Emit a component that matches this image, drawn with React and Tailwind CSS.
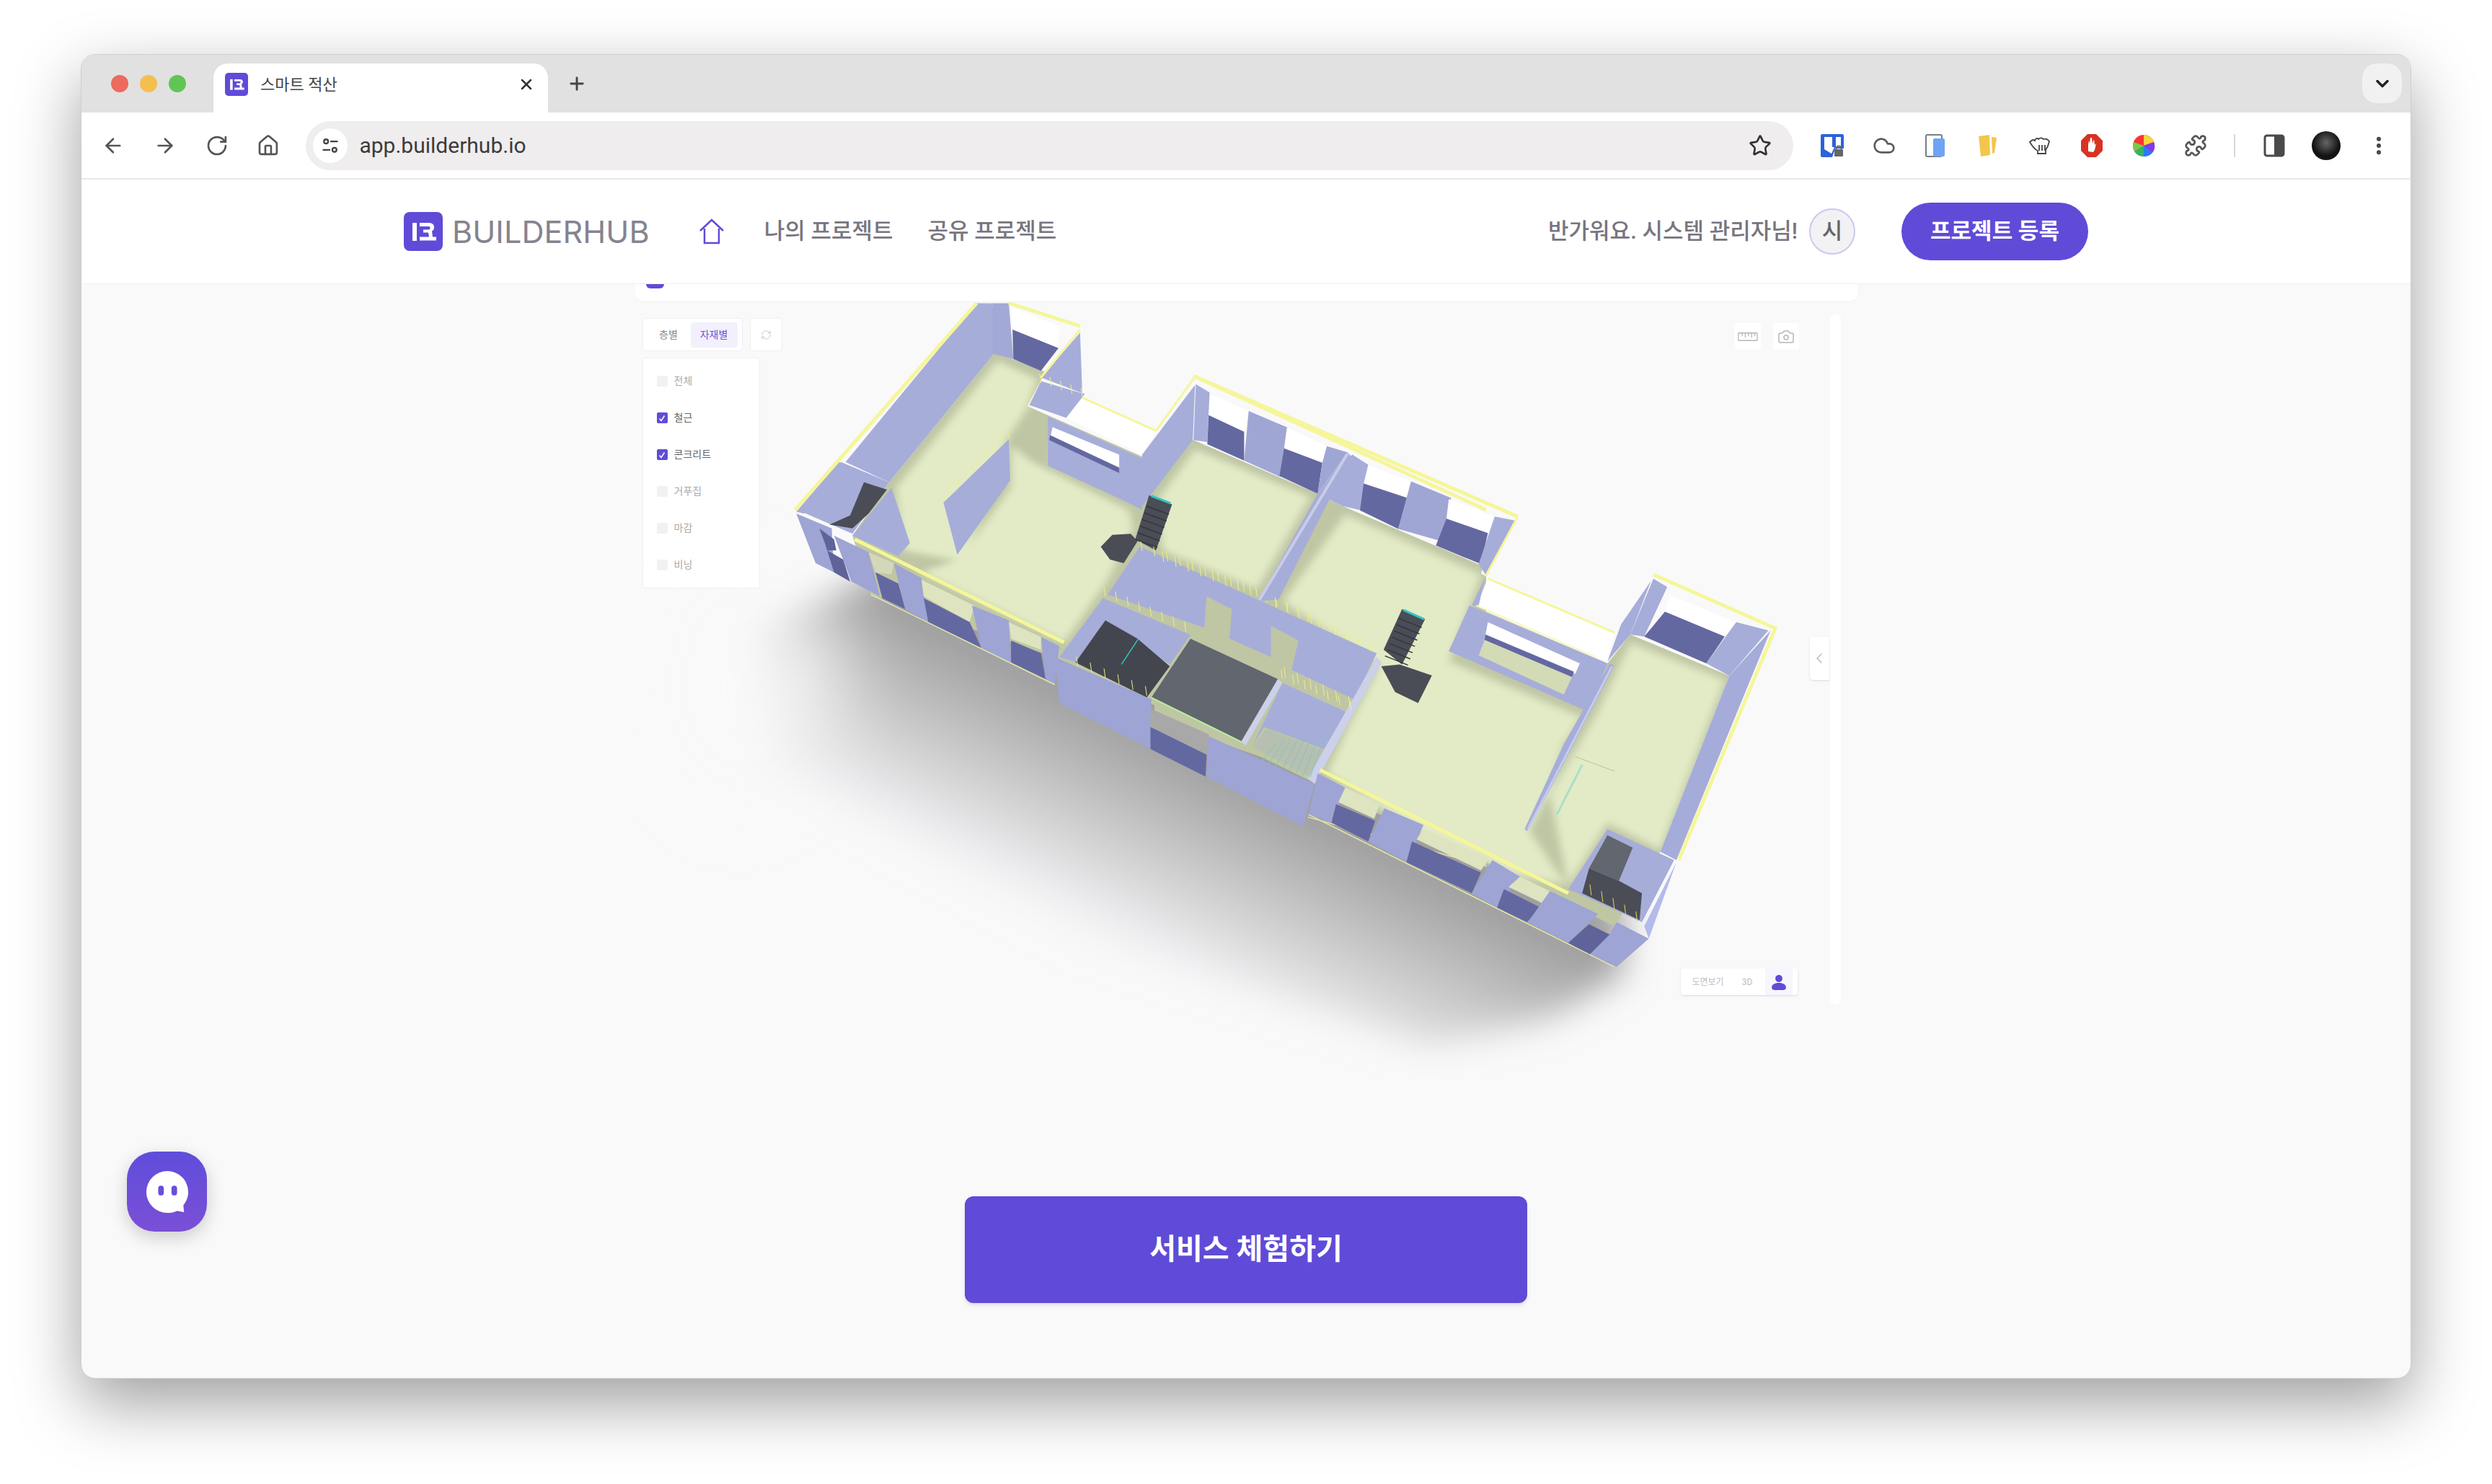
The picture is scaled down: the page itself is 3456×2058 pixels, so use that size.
import React from 'react';
import { ArrowLeft, ArrowRight, RotateCw, House, Star, EllipsisVertical, Puzzle, Cloud, ChevronDown, ChevronLeft, X, Plus, RefreshCw, Camera } from 'lucide-react';

const WALL = '#a7add9';
const FRONT = '#9ea4d4';
const DARK = '#6468a0';
const WHITE = '#ffffff';
const STAIR = '#4a4d56';
const STRIP = '#d4d8b8';

// left half of the model, zoom coordinates of the first crop
const leftFloors = [
  '505,195 592,245 572,320 530,400 430,740 300,710 285,540',
  '535,425 580,470 790,600 800,650 745,790 650,960 340,770 420,735 535,540',
  '625,470 770,550 770,510 625,425',
  '935,435 1185,565 1070,815 865,710 850,580',
];

const leftWalls = [
  [WALL, '460,38 175,470 270,525 500,172 495,40'],
  ['#a3a9d5', '460,38 530,38 540,190 495,175 495,40'],
  [WHITE, '535,50 640,100 638,160 538,110'],
  [DARK, '538,110 638,160 600,222 540,190'],
  [WALL, '685,118 600,240 695,285 690,290'],
  [WALL, '600,250 695,285 655,350 575,315'],
  [WHITE, '690,295 850,385 820,450 655,350'],
  [WALL, '566,318 820,460 820,600 772,570 615,480 615,345'],
  [WHITE, '625,375 770,450 770,490 620,405'],
  [DARK, '620,397 770,485 770,500 618,410'],
  [WALL, '935,260 930,410 820,590 820,450'],
  [WALL, '388,580 530,408 533,520 418,722'],
  [WALL, '165,470 270,525 190,665 80,605'],
  [STAIR, '215,525 265,545 225,610 190,650 140,640 185,615'],
  [WALL, '275,540 315,690 290,725 190,670'],
  [WALL, '160,470 175,476 85,610 68,605'],
  [FRONT, '68,610 145,650 150,770 110,745'],
  ['#5f6399', '118,650 150,680 155,710 135,710 170,735 185,795 150,770 130,690'],
  [FRONT, '150,670 225,715 250,835 188,795'],
  [STRIP, '225,715 280,745 275,775 240,770'],
  [DARK, '240,770 290,800 305,870 255,840'],
  [FRONT, '280,745 340,785 355,905 305,870'],
  ['#dde4bf', '340,790 455,860 445,905 345,835'],
  [DARK, '345,840 445,905 470,975 355,905'],
  [FRONT, '450,860 530,900 535,1020 470,975'],
  ['#dde4bf', '530,905 600,945 600,980 535,950'],
  [DARK, '535,955 600,990 610,1060 535,1015'],
  [FRONT, '600,945 640,970 630,1075 610,1060'],
  // long corridor wall, door openings cut out of its lower edge
  [WALL, '815,700 1330,990 1280,1115 1145,1035 1160,955 1100,915 1100,1000 1010,950 1015,870 960,835 955,920 745,830'],
  [WALL, '735,840 925,940 880,1020 740,900 680,1015 640,1000'],
  ['#62666f', '925,950 1115,1060 1035,1230 840,1110'],
  ['#43464e', '740,900 810,950 880,1025 830,1110 675,1015'],
  [FRONT, '630,1000 840,1115 838,1250 640,1125'],
  ['#a8a8a8', '838,1140 965,1210 965,1270 838,1190'],
  [DARK, '838,1190 960,1265 958,1325 838,1250'],
  [FRONT, '965,1215 1195,1345 1170,1460 960,1325'],
  [WALL, '1125,1070 1265,1150 1215,1250 1085,1190 1060,1240'],
  ['#b7bfb0', '1090,1195 1215,1255 1185,1325 1060,1245'],
  ['#ccd0ea', '1330,1000 1340,1015 1195,1345 1180,1330'],
  ['#ccd0ea', '1115,1060 1125,1070 1045,1240 1035,1232'],
  [STAIR, '835,560 885,585 850,710 805,680'],
  [STAIR, '730,700 755,668 795,665 810,685 780,745 750,735'],
  [STAIR, '1385,870 1435,897 1385,1020 1345,980'],
  [STAIR, '1340,1025 1380,1020 1450,1050 1420,1125 1370,1095'],
];

// right half, zoom coordinates of the second crop
const rightFloors = [
  '415,405 710,550 680,640 640,760 930,895 890,960 860,1070 815,1170 895,1300 780,1275 580,1175 375,1030 430,900 490,770 280,615',
  '1035,715 1240,805 1100,1215 985,1150 900,1300 860,1080 965,880',
];

const rightWalls = [
  [WALL, '90,90 120,110 115,230 85,225'],
  [WHITE, '122,115 205,155 195,205 118,165'],
  [DARK, '118,165 195,205 195,275 115,235'],
  ['#a0a6d4', '205,155 290,195 275,315 195,275'],
  [WHITE, '288,195 375,240 365,280 282,245'],
  [DARK, '282,245 365,280 355,355 272,312'],
  ['#a0a6d4', '375,240 420,255 355,355 365,280'],
  [WALL, '420,255 428,265 270,610 225,615 355,355'],
  ['#a7add9', '430,260 465,285 450,395 410,385 355,355'],
  [WHITE, '465,285 558,325 550,365 455,330'],
  [DARK, '455,330 550,365 530,440 447,395'],
  ['#a0a6d4', '558,325 645,365 625,470 530,440'],
  [WHITE, '640,368 740,410 725,450 635,415'],
  [DARK, '635,415 725,450 710,525 612,480'],
  [WALL, '740,410 785,420 720,550 705,525'],
  [WHITE, '725,560 1000,690 985,760 700,625'],
  [WALL, '720,555 705,625 690,625'],
  // wall with the wide window, frame then opening
  [WALL, '685,625 985,765 940,880 640,735'],
  [WHITE, '725,665 925,765 915,790 720,695'],
  [DARK, '720,695 912,785 908,798 718,708'],
  ['#d3dab6', '718,708 908,798 890,840 705,745'],
  [WALL, '1080,565 1035,695 985,760 1015,670'],
  [WALL, '1085,560 1115,580 1065,700 1035,695'],
  [WHITE, '1120,600 1265,665 1240,700 1110,640'],
  [DARK, '1110,640 1240,700 1200,765 1065,700'],
  [WALL, '1265,665 1335,685 1250,795 1200,765'],
  ['#a6acd9', '1340,685 1250,795 1100,1220 1135,1240'],
  [WALL, '990,765 1000,770 860,1070 810,1170 805,1165 890,960'],
  ['#a7add9', '985,1165 1130,1240 1060,1390 900,1310'],
  ['#62666f', '985,1180 1040,1210 1010,1290 945,1260'],
  [STAIR, '945,1260 1010,1290 1060,1320 1055,1385 930,1320'],
  [FRONT, '355,1030 415,1065 385,1150 335,1130'],
  ['#dde4bf', '415,1065 490,1105 478,1140 400,1100'],
  [DARK, '395,1105 480,1145 465,1195 385,1150'],
  [FRONT, '500,1115 585,1155 550,1245 465,1195'],
  ['#dde4bf', '585,1165 725,1240 710,1265 570,1190'],
  [DARK, '560,1195 710,1270 690,1320 548,1245'],
  [FRONT, '735,1240 795,1280 745,1355 690,1320'],
  ['#dde4bf', '795,1280 860,1315 845,1345 770,1305'],
  [DARK, '760,1310 840,1355 810,1390 745,1355'],
  [FRONT, '860,1315 965,1370 900,1440 812,1390'],
  ['#5f6399', '945,1395 990,1420 945,1470 900,1440'],
  [FRONT, '1005,1390 1075,1430 1005,1498 945,1470 990,1420'],
  ['#b4baea', '1135,1245 1075,1430 1065,1400'],
];

// short rebar ticks along a wall top
const Ticks = ({ x1, y1, x2, y2, n, h = 26, color = '#eef08a' }) => (
  <>
    {Array.from({ length: n }, (_, i) => {
      const x = x1 + ((x2 - x1) * i) / (n - 1);
      const y = y1 + ((y2 - y1) * i) / (n - 1);
      return <line key={i} x1={x} y1={y} x2={x - 3} y2={y - h} stroke={color} strokeWidth="1" vectorEffect="non-scaling-stroke" />;
    })}
  </>
);

const Edge = ({ d, color = '#f5f69a', w = 3 }) => (
  <polyline points={d} fill="none" stroke={color} strokeWidth={w} vectorEffect="non-scaling-stroke" />
);

const Polys = ({ items }) => items.map(([fill, points], i) => <polygon key={i} fill={fill} points={points} />);

const A = 'translate(1060 400) scale(0.6378 0.5102)';
const B = 'translate(1600 480) scale(0.6378 0.574)';

const BuildingModel = () => (
  <svg viewBox="880 393 1700 1100" className="absolute left-0 top-0 h-[1100px] w-[1700px]">
    <defs>
      <filter id="soft" x="-20%" y="-20%" width="140%" height="140%"><feGaussianBlur stdDeviation="9" /></filter>
      <filter id="castBlur" x="-20%" y="-30%" width="140%" height="160%"><feGaussianBlur stdDeviation="24" /></filter>
      <filter id="washBlur" x="-50%" y="-50%" width="200%" height="200%"><feGaussianBlur stdDeviation="50" /></filter>
      <linearGradient id="cast" gradientUnits="userSpaceOnUse" x1="1722" y1="1081" x2="1574" y2="1377">
        <stop offset="0" stopColor="#9f9f9f" />
        <stop offset="0.35" stopColor="#c2c2c2" />
        <stop offset="0.75" stopColor="#ececee" />
        <stop offset="1" stopColor="#f9f9fa" stopOpacity="0" />
      </linearGradient>
    </defs>

    <polygon fill="url(#cast)" filter="url(#castBlur)" points="1300,750 2250,1250 2250,1350 2150,1410 1980,1450 1500,1300 1060,1060 1050,880" />
    {/* the cast shadow thins out towards the far end */}
    <polygon fill="#f9f9fa" opacity="0.8" filter="url(#washBlur)" points="960,780 1160,860 1160,1000 1020,1120 920,1000" />

    {/* floors: dark base first, then the lit middle of each room */}
    <polygon transform={A} fill="#bfc6a4" points="500,172 610,225 570,318 820,455 930,410 1270,600 1568,780 1568,1568 1200,1345 630,1000 230,830 190,670 270,525" />
    <polygon transform={B} fill="#bfc6a4" points="85,225 355,355 410,385 715,530 690,625 985,765 1035,695 1250,795 1100,1220 1000,1400 345,1035 0,900 0,300" />
    <g transform={A} filter="url(#soft)" fill="#e2ebc6">{leftFloors.map((p, i) => <polygon key={i} points={p} />)}</g>
    <g transform={B} filter="url(#soft)" fill="#e2ebc6">{rightFloors.map((p, i) => <polygon key={i} points={p} />)}</g>

    <g transform={A}>
      <Polys items={leftWalls} />
      <Edge d="460,38 160,465 65,600" w={5} />
      <Edge d="530,38 685,100" w={5} />
      <Edge d="600,240 685,110" w={3} />
      <Edge d="690,295 850,385" />
      <Edge d="935,238 1568,600" w={5} />
      <Edge d="935,238 850,385" w={3} />
      <Edge d="195,680 650,960" w={5} />
      <Edge d="230,830 630,1075" color="#e3e8a8" w={1.5} />
      <Edge d="840,1110 1035,1230" color="#b8f0a0" w={2} />
      <Edge d="1180,1435 1568,1568" color="#e3e8a8" w={1.5} />
      <Edge d="840,562 882,582" color="#35c4c4" w={3} />
      <Edge d="1388,872 1433,897" color="#35c4c4" w={3} />
      <Edge d="775,1020 812,950" color="#35c4c4" w={1.5} />
      {[0, 1, 2, 3, 4, 5].map(i => (
        <Edge key={i} d={`${830 - i * 5},${590 + i * 18} ${878 - i * 5},${612 + i * 18}`} color="#33363c" w={1.5} />
      ))}
      {[0, 1, 2, 3, 4, 5, 6].map(i => (
        <Edge key={i} d={`${1378 - i * 5},${895 + i * 17} ${1428 - i * 5},${920 + i * 17}`} color="#33363c" w={1.5} />
      ))}
      {[0, 1, 2, 3, 4, 5, 6, 7].map(i => (
        <Edge key={i} d={`${1112 + i * 15},${1232 - i * 2} ${1080 + i * 15},${1285 + i * 6}`} color="#7cc8c4" w={1} />
      ))}
      <Ticks x1={390} y1={575} x2={530} y2={405} n={10} />
      <Ticks x1={820} y1={712} x2={1070} y2={835} n={10} />
      <Ticks x1={1090} y1={850} x2={1320} y2={985} n={11} />
      <Ticks x1={740} y1={835} x2={915} y2={930} n={8} />
      <Ticks x1={1125} y1={1060} x2={1275} y2={1145} n={7} />
      <Ticks x1={680} y1={1025} x2={830} y2={1105} n={6} />
      <Ticks x1={600} y1={255} x2={690} y2={295} n={5} />
    </g>

    <g transform={B}>
      <Polys items={rightWalls} />
      <Edge d="85,70 790,410" w={5} />
      <Edge d="790,410 720,555" w={3} />
      <Edge d="725,560 1000,690" w={3} />
      <Edge d="700,625 960,750" color="#f7f8c0" w={2} />
      <Edge d="1085,550 1350,680 1140,1240" w={5} />
      <Edge d="360,1022 900,1320" w={5} />
      <Edge d="335,1130 1000,1498" color="#e3e8a8" w={1.5} />
      <Edge d="420,258 228,612" color="#c8cce8" w={4} />
      <Edge d="995,772 812,1165" color="#c6cbee" w={3} />
      <Edge d="915,990 1000,1025" color="#b8c0a0" w={1} />
      <Edge d="875,1130 930,1010" color="#a8e0c8" w={3} />
      <Ticks x1={265} y1={630} x2={470} y2={735} n={9} />
      <Ticks x1={20} y1={520} x2={210} y2={600} n={8} />
      <Ticks x1={285} y1={800} x2={425} y2={870} n={6} />
      <Ticks x1={950} y1={1325} x2={1050} y2={1390} n={5} color="#e5d84a" />
    </g>
  </svg>
);

const LogoMark = ({ className }) => (
  <svg viewBox="0 0 54 54" className={className}>
    <rect width="54" height="54" rx="8" fill="#5f4bd8" />
    <rect x="12" y="15" width="6" height="25" fill="#fff" />
    <path d="M22 15h13q7 0 7 6.500 0 3.500-3 5l1 8h5v5H22v-5h13l-1-6h-7v-4h7q2.500 0 2.500-2.500T34 20H22z" fill="#fff" />
  </svg>
);

const ExtensionIcons = () => (
  <div className="flex items-center">
    {/* password manager */}
    <svg viewBox="0 0 32 32" className="h-8 w-8">
      <path d="M0 2a2 2 0 0 1 2-2h28a2 2 0 0 1 2 2v18H20l-4 12H2a2 2 0 0 1-2-2z" fill="#2b63d9" />
      <path d="M5 4h23v14h-9l-4 9-10-6z" fill="#fff" />
      <rect x="16" y="4" width="5" height="14" fill="#2b63d9" />
      <rect x="19" y="21" width="12" height="10" rx="1" fill="#666" />
      <circle cx="25" cy="20" r="3.500" fill="none" stroke="#666" strokeWidth="2" />
    </svg>
    <Cloud className="ml-10 h-8 w-8 text-[#5a5a5a]" strokeWidth={2} />
    <svg viewBox="0 0 32 32" className="ml-10 h-8 w-8">
      <rect x="2" y="1" width="22" height="30" rx="2" fill="#fff" stroke="#777e88" strokeWidth="2" />
      <rect x="12" y="6" width="16" height="25" rx="2" fill="#6ea4f4" />
    </svg>
    <svg viewBox="0 0 32 32" className="ml-10 h-8 w-8">
      <path d="M3 3l15-2 1 28-13 2z" fill="#f2c64d" />
      <path d="M21 4l7 1-3 21-3 1z" fill="#f2c64d" />
    </svg>
    <svg viewBox="0 0 32 32" className="ml-10 h-8 w-8" fill="none" stroke="#444" strokeWidth="1.800">
      <path d="M2 11c3-3 5-4 7-2 1-3 3-4 5-2 2-2 5-2 7 0 3-1 6 0 8 3-1 5-3 9-5 12v5H13v-4C8 21 5 16 2 11z" />
      <path d="M15 15v8M19 15v8M23 15v8" />
    </svg>
    <svg viewBox="0 0 32 32" className="ml-10 h-8 w-8">
      <path d="M10 0h12l9 9v14l-9 9H10l-9-9V9z" fill="#d83224" />
      <path d="M11 24v-10l1-5 1 4 1-8 2 0 1 8 2-6 1 8 2-2-2 9-2 3z" fill="#fff" />
    </svg>
    <svg viewBox="0 0 32 32" className="ml-10 h-8 w-8">
      <circle cx="16" cy="16" r="15" fill="#f33" />
      <path d="M16 16L16 1A15 15 0 0 1 30 11z" fill="#f7d43a" />
      <path d="M16 16L30 11A15 15 0 0 1 28 26z" fill="#7b3cf0" />
      <path d="M16 16L28 26A15 15 0 0 1 16 31z" fill="#2a7bf4" />
      <path d="M16 16L16 31A15 15 0 0 1 3 24z" fill="#35b36b" />
      <path d="M16 16L3 24A15 15 0 0 1 2 11z" fill="#7ac943" />
    </svg>
    <Puzzle className="ml-10 h-8 w-8 text-[#555]" strokeWidth={2} />
    <div className="ml-[37px] h-8 w-[2px] bg-[#d9d9d9]" />
    <svg viewBox="0 0 32 32" className="ml-[38px] h-8 w-8">
      <rect x="3" y="2" width="26" height="28" rx="3" fill="none" stroke="#4a4a4a" strokeWidth="3" />
      <rect x="16" y="2" width="13" height="28" fill="#4a4a4a" />
    </svg>
    <div className="ml-[36px] h-10 w-10 rounded-full bg-[radial-gradient(circle_at_50%_40%,#666,#111_60%,#222)]" />
    <EllipsisVertical className="ml-[37px] h-8 w-8 text-[#444]" strokeWidth={2.500} />
  </div>
);

const materials = [
  { name: '전체', on: false },
  { name: '철근', on: true },
  { name: '콘크리트', on: true },
  { name: '거푸집', on: false },
  { name: '마감', on: false },
  { name: '비닝', on: false },
];

const DemoOverlay = () => (
  <>
    {/* top bar of the embedded viewer */}
    <div className="absolute left-0 top-0 h-[25px] w-[1695px] rounded-b-xl border-b border-[#f0f0f2] bg-white">
      <div className="ml-[15px] h-[6px] w-[25px] rounded-b-md bg-[#5f4bd8]" />
    </div>

    <div className="absolute left-[10px] top-[47px] flex gap-[10px]">
      <div className="flex h-[46px] w-[139px] items-center rounded border border-[#f0f0f2] bg-white px-[5px] text-[14px]">
        <span className="w-[61px] text-center text-[#888]">층별</span>
        <span className="flex h-[35px] w-[65px] items-center justify-center rounded-sm bg-[#f3f0fd] text-[#6a55d8]">자재별</span>
      </div>
      <div className="flex h-[46px] w-[45px] items-center justify-center rounded border border-[#f0f0f2] bg-white">
        <RefreshCw className="h-[15px] w-[15px] text-[#c4c4c4]" strokeWidth={1.500} />
      </div>
    </div>

    <div className="absolute left-[10px] top-[102px] flex h-[320px] w-[163px] flex-col justify-between rounded border border-[#f0f0f2] bg-white px-[19px] py-[21px]">
      {materials.map(m => (
        <div key={m.name} className="flex items-center gap-[9px] text-[14px]">
          {m.on ? (
            <span className="flex h-[15px] w-[15px] items-center justify-center rounded-[2px] bg-[#5f4bd8]">
              <svg viewBox="0 0 12 12" className="h-3 w-3"><path d="M2.500 6.500l2.500 3 4.500-7" fill="none" stroke="#fff" strokeWidth="1.500" /></svg>
            </span>
          ) : (
            <span className="h-[15px] w-[15px] rounded-[2px] bg-[#f1f1f2]" />
          )}
          <span className={m.on ? 'text-[#666]' : 'text-[#aaa]'}>{m.name}</span>
        </div>
      ))}
    </div>

    <div className="absolute left-[1525px] top-[54px] flex gap-[17px]">
      <div className="flex h-[37px] w-[36px] items-center justify-center rounded bg-white">
        <svg viewBox="0 0 32 16" className="h-[14px] w-7" fill="none" stroke="#b5b5b5" strokeWidth="1.500">
          <rect x="1" y="2" width="30" height="12" rx="1" /><path d="M7 2v5M12 2v7M17 2v5M22 2v7M27 2v5" />
        </svg>
      </div>
      <div className="flex h-[37px] w-[36px] items-center justify-center rounded bg-white"><Camera className="h-6 w-6 text-[#b5b5b5]" strokeWidth={1.500} /></div>
    </div>

    <div className="absolute left-[1657px] top-[41px] h-[958px] w-[15px] rounded-full bg-white" />
    <div className="absolute left-[1629px] top-[489px] flex h-[60px] w-[27px] items-center justify-center rounded-l bg-white shadow-sm">
      <ChevronLeft className="h-6 w-6 text-[#bbb]" strokeWidth={1.500} />
    </div>

    <div className="absolute left-[1450px] top-[949px] flex h-[37px] w-[162px] items-center rounded bg-white pl-[16px] text-[12px] text-[#bdbdbd] shadow-sm">
      <span>도면보기</span>
      <span className="ml-[25px]">3D</span>
      <span className="ml-[18px] flex h-[37px] w-[38px] items-center justify-center bg-[#f7f6fe]">
        <svg viewBox="0 0 20 20" className="h-[22px] w-[22px]" fill="#5f4bd8">
          <circle cx="10" cy="5.500" r="4.500" /><path d="M1 17c0-4 4-6 9-6s9 2 9 6c0 2-2 3-4 3H5c-2 0-4-1-4-3z" />
        </svg>
      </span>
    </div>
  </>
);

export default function App() {
  return (
    <div className="min-h-screen bg-white px-[112px] pb-[146px] pt-[75px] font-['Roboto','Noto_Sans_CJK_KR',sans-serif]">
      <div className="relative flex h-[1837px] flex-col overflow-hidden rounded-[20px] border border-[#cfcfcf] bg-[#f9f9fa] shadow-[0_34px_90px_rgba(0,0,0,0.38)]">

        {/* TAB STRIP */}
        <div className="flex h-[80px] shrink-0 items-start bg-[#e1e1e1] pl-[41px] pt-[12px]">
          <div className="flex items-center gap-4 pt-[16px]">
            <span className="h-6 w-6 rounded-full bg-[#ec6a5e]" />
            <span className="h-6 w-6 rounded-full bg-[#f4bf4f]" />
            <span className="h-6 w-6 rounded-full bg-[#61c554]" />
          </div>
          <div className="ml-[38px] flex h-[68px] w-[464px] items-center rounded-t-[20px] bg-white pb-[10px] pl-[16px] pr-[18px]">
            <LogoMark className="h-8 w-8" />
            <span className="ml-[17px] flex-1 text-[22px] text-[#444]">스마트 적산</span>
            <X className="h-6 w-6 text-[#333]" strokeWidth={2.500} />
          </div>
          <Plus className="ml-[26px] mt-[14px] h-7 w-7 text-[#444]" strokeWidth={2.500} />
          <div className="ml-auto mr-[12px] flex h-[55px] w-[55px] items-center justify-center rounded-[20px] bg-[#f1f1f1]">
            <ChevronDown className="h-7 w-7 text-[#222]" strokeWidth={3} />
          </div>
        </div>

        {/* TOOLBAR */}
        <div className="flex h-[93px] shrink-0 items-center border-b-2 border-[#e9e9e9] bg-white pl-[28px] pr-[28px] text-[#555]">
          <ArrowLeft className="h-8 w-8" strokeWidth={2} />
          <ArrowRight className="ml-10 h-8 w-8" strokeWidth={2} />
          <RotateCw className="ml-10 h-8 w-8" strokeWidth={2} />
          <House className="ml-[39px] h-8 w-8" strokeWidth={2} />
          <div className="ml-[37px] flex h-[68px] w-[2072px] items-center rounded-full bg-[#efedee] pl-[10px] pr-[30px]">
            <div className="flex h-12 w-12 items-center justify-center rounded-full bg-white">
              <svg viewBox="0 0 24 24" className="h-7 w-7" fill="none" stroke="#444" strokeWidth="2">
                <circle cx="7" cy="7" r="2.500" /><path d="M12 7h9M3 17h9" /><circle cx="17" cy="17" r="2.500" />
              </svg>
            </div>
            <span className="ml-[16px] flex-1 text-[30px] text-[#3c3c3c]">app.builderhub.io</span>
            <Star className="h-8 w-8 text-[#333]" strokeWidth={2} />
          </div>
          <div className="ml-[38px]"><ExtensionIcons /></div>
        </div>

        {/* APP HEADER */}
        <header className="flex h-[145px] shrink-0 items-center justify-between border-b border-[#f0f0f2] bg-white px-[447px]">
          <div className="flex items-center">
            <LogoMark className="h-[54px] w-[54px]" />
            <span className="ml-[13px] font-['Inter',sans-serif] text-[43px] tracking-[0.100px] text-[#85838f]">BUILDERHUB</span>
            <svg viewBox="0 0 36 36" className="ml-[68px] h-[38px] w-[36px]" fill="none" stroke="#5f4bd8" strokeWidth="2.500">
              <path d="M2 17L18 2l16 15M8 14v20h20V14" />
            </svg>
            <span className="ml-[55px] text-[31px] font-medium text-[#77757f]">나의 프로젝트</span>
            <span className="ml-[48px] text-[31px] font-medium text-[#77757f]">공유 프로젝트</span>
          </div>
          <div className="flex items-center">
            <span className="text-[31px] font-medium text-[#77757f]">반가워요. 시스템 관리자님!</span>
            <span className="ml-[16px] flex h-16 w-16 items-center justify-center rounded-full border-2 border-[#cdc7f0] bg-[#f2f2f4] text-[31px] font-medium text-[#666]">시</span>
            <button className="ml-[64px] h-20 w-[259px] rounded-full bg-[#5f4bd8] text-[31px] font-bold text-white">프로젝트 등록</button>
          </div>
        </header>

        {/* CONTENT */}
        <main className="flex flex-1 flex-col items-center pb-[104px]">
          <div className="relative w-[1695px] flex-1">
            <BuildingModel />
            <DemoOverlay />
          </div>
          <button className="h-[148px] w-[780px] rounded-xl bg-[#5f4bd8] text-[40px] font-bold text-white shadow-md">서비스 체험하기</button>
        </main>

        {/* chat launcher */}
        <button className="absolute bottom-[203px] left-[63px] flex h-[111px] w-[111px] items-center justify-center rounded-[38px] bg-gradient-to-b from-[#5f4ddb] to-[#7a4fd6] shadow-[0_8px_24px_rgba(0,0,0,0.18)]">
          <svg viewBox="0 0 64 64" className="h-[62px] w-[62px]">
            <path d="M32 2a30 30 0 1 0 0 60c5 0 10-1 14-3l10 2-1-10c4-5 7-11 7-19A30 30 0 0 0 32 2z" fill="#fff" />
            <rect x="19" y="23" width="8" height="14" rx="4" fill="#6a4ed8" />
            <rect x="38" y="23" width="8" height="14" rx="4" fill="#6a4ed8" />
          </svg>
        </button>
      </div>
    </div>
  );
}
